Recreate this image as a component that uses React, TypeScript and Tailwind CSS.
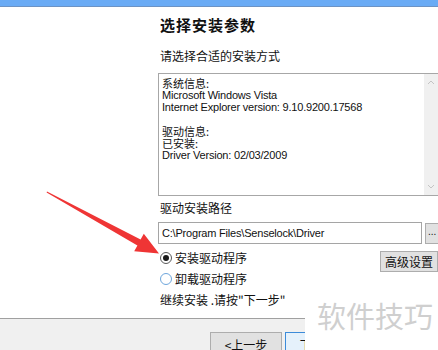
import React from "react";

const cjk = { fontFamily: '"Noto Sans CJK SC", "Noto Sans", sans-serif' };
const latin = { fontFamily: '"Liberation Sans", "Noto Sans CJK SC", sans-serif' };

function Radio({ checked }: { checked?: boolean }) {
  return (
    <span
      className={
        "flex h-[12px] w-[12px] items-center justify-center rounded-full border bg-white " +
        (checked ? "border-[#5a5a5a]" : "border-[#6ea6dc]")
      }
    >
      {checked && <span className="h-[6px] w-[6px] rounded-full bg-[#1a1a1a]" />}
    </span>
  );
}

export default function App() {
  return (
    <div className="relative h-[350px] w-[438px] overflow-hidden bg-white text-[#111]" style={cjk}>
      <div className="h-[7px] border-b border-[#6d93c4] bg-[#6aabf5]" />
      <div className="flex flex-col pl-[158px]">
        <div className="mt-[7px] h-[22px] pl-[2px] text-[15px] font-bold leading-[22px] tracking-[1px]">
          选择安装参数
        </div>
        <div className="mt-[12px] h-[16px] pl-[2px] text-[12px] leading-[16px]">请选择合适的安装方式</div>
        <div className="mt-[9px] flex h-[123px] w-[300px] border border-[#a7a7a7] bg-white">
          <div className="flex-1 pl-[3px] pt-[3px] text-[11px] leading-[12px]">
            <div>系统信息:</div>
            <div style={latin} className="tracking-[-0.2px]">Microsoft Windows Vista</div>
            <div style={latin} className="tracking-[-0.2px]">Internet Explorer version: 9.10.9200.17568</div>
            <div className="h-[12px]" />
            <div>驱动信息:</div>
            <div>已安装:</div>
            <div style={latin} className="tracking-[-0.2px]">Driver Version: 02/03/2009</div>
          </div>
          <div className="mr-[19px] flex w-[14px] flex-col items-center justify-between bg-[#f0f0f0] py-[6px]">
            <svg width="8" height="5" viewBox="0 0 8 5">
              <path d="M1 4 L4 1 L7 4" stroke="#c4c4c4" strokeWidth="1" fill="none" />
            </svg>
            <svg width="8" height="5" viewBox="0 0 8 5">
              <path d="M1 1 L4 4 L7 1" stroke="#c4c4c4" strokeWidth="1" fill="none" />
            </svg>
          </div>
        </div>
        <div className="mt-[4px] h-[16px] pl-[2px] text-[12px] leading-[16px]">驱动安装路径</div>
        <div className="mt-[6px] flex items-center gap-[3px]">
          <div
            className="flex h-[22px] w-[264px] shrink-0 items-center border border-[#a5a5a5] pl-[3px] text-[11px] tracking-[-0.2px]"
            style={latin}
          >
            C:\Program Files\Senselock\Driver
          </div>
          <div
            className="flex h-[21px] w-[20px] shrink-0 items-center border border-[#adadad] bg-[#e1e1e1] pb-[4px] pl-[2px] text-[10px]"
            style={latin}
          >
            ...
          </div>
        </div>
        <div className="mt-[6px] flex items-start">
          <div className="flex flex-1 flex-col">
            <div className="flex h-[16px] items-center gap-[3px] pl-[2px] text-[12px]">
              <Radio checked />
              <span>安装驱动程序</span>
            </div>
            <div className="mt-[5px] flex h-[16px] items-center gap-[3px] pl-[2px] text-[12px]">
              <Radio />
              <span>卸载驱动程序</span>
            </div>
          </div>
          <div className="mt-[1px] flex h-[21px] w-[58px] items-center border border-[#adadad] bg-[#e1e1e1] pl-[4px] text-[12px]">
            高级设置
          </div>
        </div>
        <div className="mt-[5px] h-[16px] pl-[2px] text-[12px] leading-[16px]">
          继续安装 .请按"下一步"
        </div>
      </div>
      <div className="mt-[10px] h-[40px] border-t border-[#a0a0a0] bg-[#f0f0f0]">
        <div className="mt-[13px] flex gap-[3px] pl-[210px]">
          <div className="flex h-[24px] w-[72px] items-start justify-center border border-[#adadad] bg-[#e1e1e1] pt-[3px] text-[12px]">
            &lt;上一步
          </div>
          <div className="flex h-[24px] w-[72px] items-start justify-center border border-[#3c8bd9] bg-[#e5f1fb] pt-[3px] text-[12px]">
            下一步&gt;
          </div>
        </div>
      </div>
      <div className="absolute left-[305px] top-[296px] flex h-[54px] w-[133px] items-start bg-white pl-[12px] pt-[1px] text-[29px] leading-[36px] text-[#cfcfcf]">
        软件技巧
      </div>
      <svg className="absolute left-0 top-0" width="438" height="350" viewBox="0 0 438 350">
        <polygon
          points="47,191.5 140.6,239.6 143.8,233.7 159,253.5 134.2,251.3 137.4,245.4 46.6,192.6"
          fill="#ef3535"
        />
      </svg>
    </div>
  );
}
